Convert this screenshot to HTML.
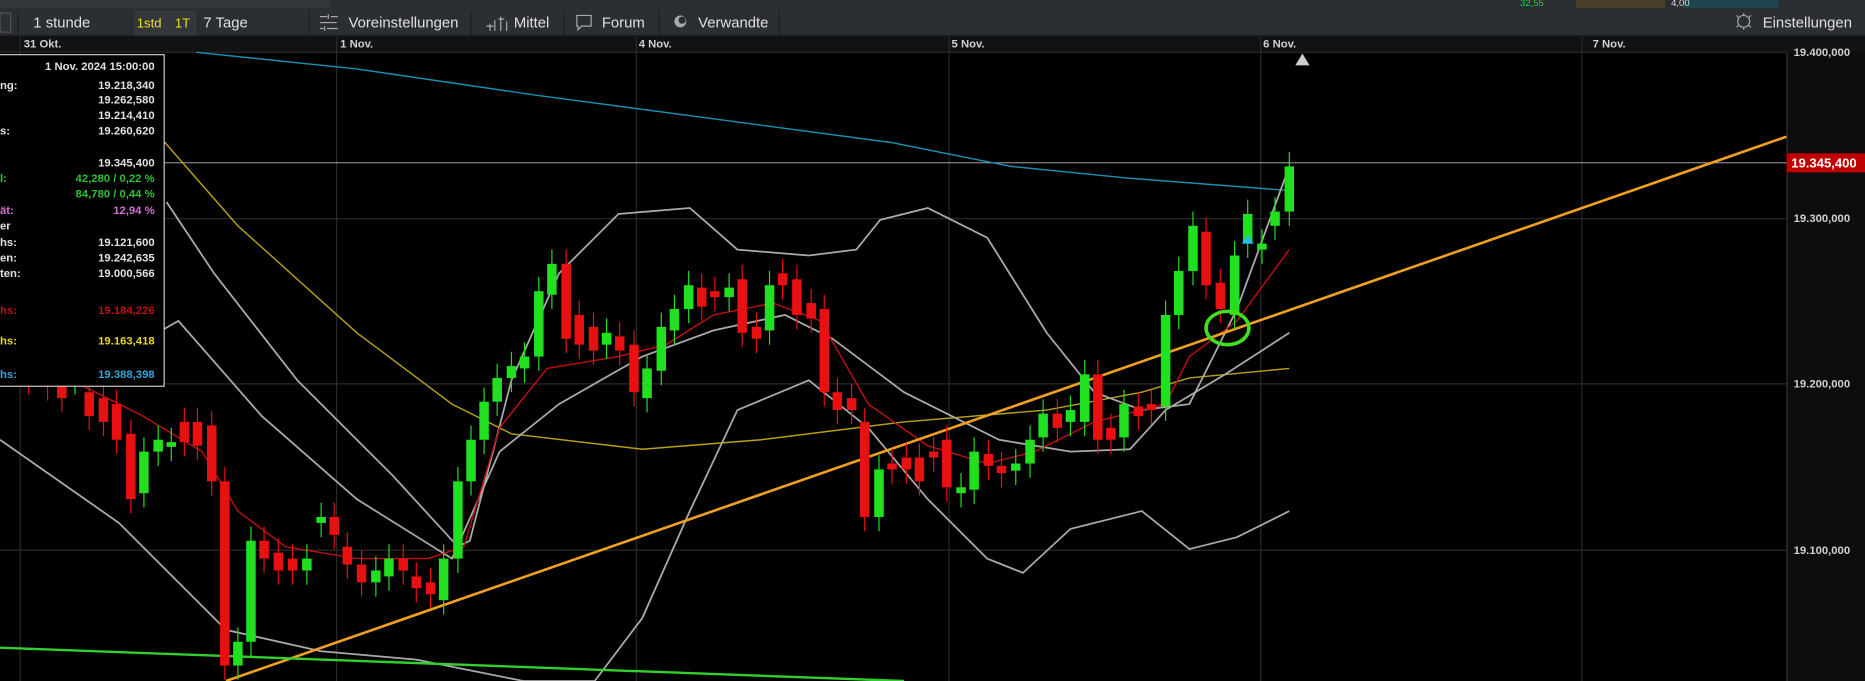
<!DOCTYPE html>
<html><head><meta charset="utf-8"><style>
html,body{margin:0;padding:0;background:#000;overflow:hidden}
svg{display:block}
text{font-family:"Liberation Sans",sans-serif}
</style></head><body>
<svg id="s" width="1865" height="681" viewBox="0 0 1568 573" preserveAspectRatio="none" xmlns="http://www.w3.org/2000/svg">
<rect width="1568" height="573" fill="#000"/>
<!-- top strip -->
<rect x="0" y="0" width="1568" height="8" fill="#2a2d31"/>
<rect x="0" y="0" width="278" height="7" fill="#33363b"/>
<rect x="1325" y="0" width="75" height="7" fill="#4a3f2a"/>
<rect x="1415" y="0" width="80" height="7" fill="#1f4550"/>
<text x="1278" y="5" font-size="8" fill="#2ecc40">32,55</text>
<text x="1405" y="5" font-size="8" fill="#ddd">4,00</text>
<!-- toolbar -->
<rect x="0" y="8" width="1568" height="22" fill="#2b2e33"/>
<line x1="0" y1="30.5" x2="1568" y2="30.5" stroke="#15171a"/>
<g stroke="#1c1e21" stroke-width="1">
<line x1="15" y1="9" x2="15" y2="30"/><line x1="112" y1="9" x2="112" y2="30"/><line x1="166" y1="9" x2="166" y2="30"/>
<line x1="260" y1="9" x2="260" y2="30"/><line x1="396" y1="9" x2="396" y2="30"/><line x1="474" y1="9" x2="474" y2="30"/>
<line x1="554" y1="9" x2="554" y2="30"/><line x1="655" y1="9" x2="655" y2="30"/>
</g>
<rect x="112" y="9" width="54" height="21" fill="#33363b"/>
<g font-size="12.5" fill="#e0e0e0">
<text x="28" y="23">1 stunde</text>
<text x="115" y="23" fill="#f0e020" font-size="11">1std</text>
<text x="147" y="23" fill="#f0e020" font-size="11">1T</text>
<text x="171" y="23">7 Tage</text>
<text x="293" y="23">Voreinstellungen</text>
<text x="432" y="23">Mittel</text>
<text x="506" y="23">Forum</text>
<text x="587" y="23">Verwandte</text>
<text x="1482" y="23">Einstellungen</text>
</g>
<g stroke="#aaa" fill="none" stroke-width="1">
<path d="M269 14h6M278 14h6M269 19h14M269 24h3M275 24h9M276 12v4M273 22v4"/>
<path d="M412 26v-6M416 26v-9M421 26v-12M426 26v-8M409 22h6M419 16h5"/>
<path d="M485 13h12v9h-8l-3 3v-3h-1z"/>
<path d="M1461 18a5 5 0 1 0 10 0a5 5 0 1 0 -10 0M1466 11v2M1466 23v2M1460 13l1.5 1.5M1472 13l-1.5 1.5M1460 23l1.5-1.5M1472 23l-1.5-1.5"/>
</g>
<circle cx="572" cy="18" r="5" fill="#aaa"/><circle cx="573.5" cy="17" r="3" fill="#2b2e33"/>
<rect x="0" y="11" width="9" height="16" fill="none" stroke="#555"/>
<!-- time axis -->
<rect x="0" y="31" width="1568" height="13" fill="#111214"/>
<g font-size="9.5" fill="#d0d0d0" font-weight="bold">
<text x="20" y="40">31 Okt.</text><text x="286" y="40">1 Nov.</text><text x="537" y="40">4 Nov.</text>
<text x="800" y="40">5 Nov.</text><text x="1062" y="40">6 Nov.</text><text x="1339" y="40">7 Nov.</text>
</g>
<!-- price axis -->
<rect x="1502" y="44" width="66" height="529" fill="#0c0d0e"/>
<line x1="1502.5" y1="44" x2="1502.5" y2="573" stroke="#333"/>
<g font-size="9.5" fill="#d0d0d0" font-weight="bold">
<text x="1508" y="47">19.400,000</text><text x="1508" y="187">19.300,000</text>
<text x="1508" y="326">19.200,000</text><text x="1508" y="466">19.100,000</text>
</g>
<!-- grid -->
<g stroke="#2a2a2a" stroke-width="1">
<line x1="17" y1="31" x2="17" y2="573"/><line x1="283" y1="31" x2="283" y2="573"/><line x1="535" y1="31" x2="535" y2="573"/>
<line x1="798" y1="31" x2="798" y2="573"/><line x1="1060" y1="31" x2="1060" y2="573"/><line x1="1330" y1="31" x2="1330" y2="573"/>
<line x1="0" y1="44" x2="1502" y2="44"/><line x1="0" y1="184" x2="1502" y2="184"/><line x1="0" y1="323" x2="1502" y2="323"/><line x1="0" y1="463" x2="1502" y2="463"/>
</g>
<line x1="0" y1="137" x2="1502" y2="137" stroke="#bbb" stroke-width="0.8"/>
<rect x="1502" y="129" width="66" height="16" fill="#c00000"/>
<text x="1506" y="141" font-size="11" font-weight="bold" fill="#fff">19.345,400</text>
<!-- lines -->
<g fill="none" stroke-width="1.2">
<polyline stroke="#1a8fb0" points="165,44 300,58 450,80 600,100 750,120 850,140 950,150 1080,160"/>
<polyline stroke="#b8a018" points="110,90 130,110 200,190 300,280 380,340 430,365 540,378 640,370 760,355 880,345 960,330 1000,318 1084,310"/>
<polyline stroke="#aaa" stroke-width="1.5" points="140,170 180,230 250,320 330,400 385,460 395,455 430,320 470,230 520,180 580,175 620,210 680,215 720,210 740,185 780,175 830,200 880,280 920,330 960,345 1000,340 1040,260 1084,140"/>
<polyline stroke="#aaa" stroke-width="1.5" points="0,370 100,440 190,530 270,548 350,555 440,573 500,573 540,520 580,430 620,345 680,320 730,360 780,420 830,470 860,482 900,445 960,430 1000,462 1040,452 1084,430"/>
<polyline stroke="#aaa" stroke-width="1.5" points="0,260 80,310 150,270 220,350 300,420 380,470 420,380 470,340 540,300 600,278 660,265 700,285 760,330 840,370 900,380 950,378 980,345 1030,315 1084,280"/>
<polyline stroke="#c01010" points="60,320 120,350 170,380 200,430 240,460 300,470 360,470 390,460 420,360 460,310 520,300 560,290 600,265 650,255 690,270 730,340 780,375 830,390 870,380 920,355 980,340 1000,300 1040,270 1084,210"/>
</g>
<line x1="190" y1="573" x2="1502" y2="115" stroke="#f0a020" stroke-width="2.2"/>
<line x1="0" y1="545" x2="760" y2="573" stroke="#30d030" stroke-width="2"/>
<g id="c"></g>
<ellipse cx="1032" cy="276" rx="18" ry="14" fill="none" stroke="#40e020" stroke-width="3"/>
<path d="M1044 205l5-7 5 7z" fill="#30b8f0"/>
<path d="M1089 55l6-10 6 10z" fill="#ccc"/>
<!-- info box -->
<rect x="-5" y="46" width="143" height="279" fill="#000" stroke="#ccc" stroke-width="1"/>
<g font-size="9.5" font-weight="bold" text-anchor="end" fill="#e0e0e0">
<text x="130" y="59">1 Nov. 2024 15:00:00</text>
<text x="130" y="75">19.218,340</text><text x="130" y="87">19.262,580</text><text x="130" y="100">19.214,410</text><text x="130" y="113">19.260,620</text>
<text x="130" y="140">19.345,400</text>
<text x="130" y="153" fill="#30c030">42,280 / 0,22 %</text><text x="130" y="166" fill="#30c030">84,780 / 0,44 %</text>
<text x="130" y="180" fill="#d070d0">12,94 %</text>
<text x="130" y="207">19.121,600</text><text x="130" y="220">19.242,635</text><text x="130" y="233">19.000,566</text>
<text x="130" y="264" fill="#c01010">19.184,226</text><text x="130" y="290" fill="#e8d820">19.163,418</text><text x="130" y="318" fill="#30a8d8">19.388,398</text>
</g>
<g font-size="9.5" font-weight="bold" fill="#e0e0e0">
<text x="0" y="75">ng:</text><text x="0" y="113">s:</text><text x="0" y="153" fill="#30c030">l:</text><text x="0" y="180" fill="#d070d0">ät:</text>
<text x="0" y="193">er</text><text x="0" y="207">hs:</text><text x="0" y="220">en:</text><text x="0" y="233">ten:</text>
<text x="0" y="264" fill="#c01010">hs:</text><text x="0" y="290" fill="#e8d820">hs:</text><text x="0" y="318" fill="#30a8d8">hs:</text>
</g>
</svg>
<script>
var d=[[24,'r',295,320],[40,'r',300,325],[52,'r',315,335],[63,'g',300,320],[75,'r',330,350],[87,'r',335,355],[98,'r',340,370],[110,'r',365,420],[121,'g',380,415],[133,'g',370,380],[144,'g',372,376],[155,'r',355,372],[166,'r',355,375],[178,'r',358,405],[189,'r',405,560],[200,'g',540,560],[211,'g',455,540],[222,'r',455,470],[234,'r',465,480],[246,'r',470,480],[258,'g',470,480],[270,'g',435,440],[281,'r',435,450],[292,'r',460,475],[304,'r',475,490],[316,'g',480,490],[327,'g',470,485],[339,'r',470,480],[350,'r',485,495],[362,'r',490,500],[373,'g',470,505],[385,'g',405,470],[396,'g',370,405],[407,'g',338,370],[418,'g',318,338],[430,'g',308,318],[441,'g',300,310],[453,'g',245,300],[464,'g',222,248],[476,'r',222,285],[487,'r',265,290],[499,'r',275,295],[510,'g',280,290],[521,'r',283,295],[533,'r',290,330],[544,'g',310,335],[556,'g',275,312],[567,'g',260,278],[579,'g',240,260],[590,'r',242,258],[601,'r',245,250],[613,'g',242,250],[624,'r',235,280],[636,'r',275,285],[647,'g',240,278],[658,'r',230,240],[670,'r',235,265],[682,'r',255,268],[693,'r',260,330],[704,'r',330,345],[716,'r',335,345],[727,'r',355,435],[739,'g',395,435],[750,'r',390,395],[762,'r',385,395],[773,'r',385,405],[785,'r',380,385],[796,'r',370,410],[808,'g',410,415],[819,'g',380,412],[831,'r',382,392],[842,'r',392,398],[854,'g',390,396],[866,'g',370,390],[877,'g',348,368],[889,'r',348,360],[900,'g',345,355],[912,'g',315,355],[923,'r',315,370],[934,'r',360,370],[945,'g',340,368],[957,'r',342,350],[968,'r',340,345],[980,'g',265,342],[991,'g',228,265],[1003,'g',190,228],[1014,'r',195,240],[1026,'r',238,260],[1038,'g',215,265],[1049,'g',180,205],[1061,'g',205,210],[1072,'g',178,190],[1084,'g',140,178]];
var h='';d.forEach(function(c){var col=c[1]=='g'?'#20e020':'#e81010';var t=c[2],b=c[3];
h+='<line x1="'+c[0]+'" x2="'+c[0]+'" y1="'+(t-12)+'" y2="'+(b+12)+'" stroke="'+col+'" stroke-width="1"/>';
h+='<rect x="'+(c[0]-4)+'" y="'+t+'" width="8" height="'+Math.max(2,b-t)+'" fill="'+col+'"/>';});
document.getElementById('c').innerHTML=h;
</script>
</body></html>
